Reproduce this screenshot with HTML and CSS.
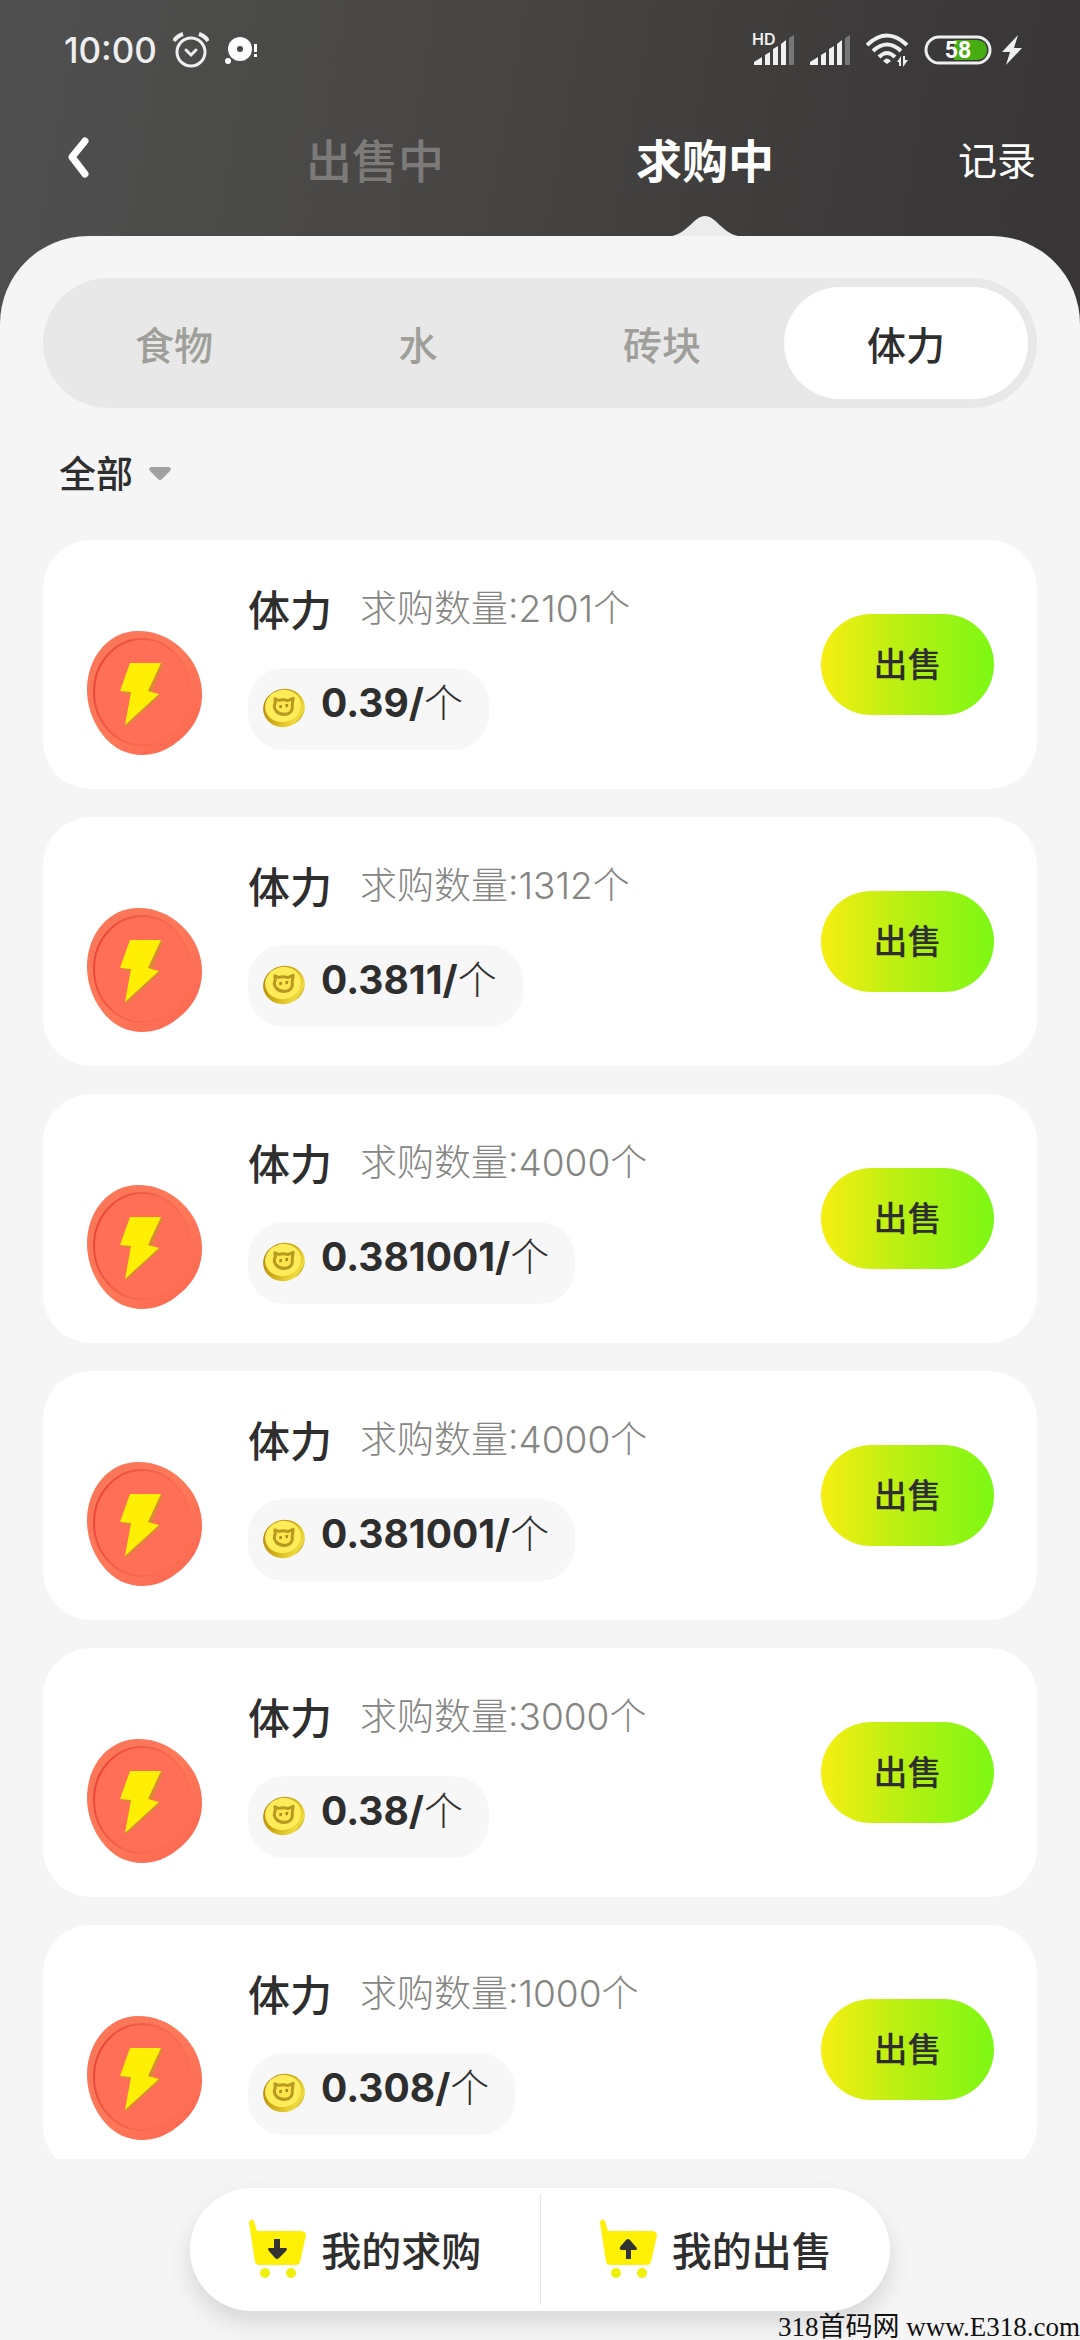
FILE: index.html
```html
<!DOCTYPE html>
<html lang="zh-CN">

<head>
    <meta charset="UTF-8">
    <meta name="viewport" content="width=device-width, initial-scale=1.0">
    <title>求购中</title>
    <link rel="stylesheet" href="styles.css">
</head>

<body>

    <!-- Shared icons -->
    <svg class="sprite" aria-hidden="true">
        <defs>
            <linearGradient id="rim" x1="0" y1="0" x2="1" y2="1">
                <stop offset="0" stop-color="#f8765a" />
                <stop offset="0.5" stop-color="#ff7859" />
                <stop offset="1" stop-color="#fb6550" />
            </linearGradient>
            <linearGradient id="groove" x1="0" y1="0.3" x2="1" y2="0.7">
                <stop offset="0" stop-color="#e9443a" />
                <stop offset="0.5" stop-color="#f4664c" />
                <stop offset="1" stop-color="#fd7055" />
            </linearGradient>
            <linearGradient id="gold" x1="0" y1="0" x2="1" y2="1">
                <stop offset="0" stop-color="#a87c10" />
                <stop offset="0.5" stop-color="#d0ae18" />
                <stop offset="0.8" stop-color="#f0dc40" />
                <stop offset="1" stop-color="#6e5312" />
            </linearGradient>
        </defs>
        <symbol id="energy" viewBox="0 0 115 125">
            <path fill="url(#rim)" d="M51 0C68 0 82 6 94 17C108 30 115 46 115 64C115 84 105 100 90 111C79 120 67 124 55 124C41 124 26 118 15 103C5 90 0 74 0 59C0 26 22 0 51 0Z" />
            <ellipse cx="55" cy="61" rx="48" ry="53" fill="#ff6f57" stroke="url(#groove)" stroke-width="2" />
            <path fill="#d98a35" d="M46 34L76 33L65 61L74 64L38 97L46 64L36 62Z" />
            <path fill="#ffef05" d="M43 32H74L61 60L72 63L38 94L44 61L33 60Z" />
        </symbol>
        <symbol id="gold-coin" viewBox="0 0 43 41">
            <ellipse cx="22" cy="21" rx="21" ry="19" transform="rotate(-14 22 21)" fill="url(#gold)" />
            <ellipse cx="21" cy="19" rx="18" ry="16" transform="rotate(-14 21 19)" fill="#ffec58" />
            <g transform="rotate(8 21 19)">
                <path fill="#ffe64e" stroke="#b69a20" stroke-width="3" stroke-linejoin="round" d="M12 13L16 14Q21 12 25 13L30 10L30 17Q32 23 27 26Q20 29 15 25Q11 21 13 17Z" />
                <path fill="#a98b1c" d="M17 19l3-1v3l-2 1zM23 17l3-1v3l-2 1z" />
            </g>
        </symbol>
        <symbol id="cart" viewBox="0 0 58 60">
            <path fill="#fff006" d="M1 3Q3-1 6 2L9 12H54Q58 13 58 16L52 43Q51 46 48 46H11Q8 46 7 43Z" />
            <circle cx="17" cy="54" r="5" fill="#f0f00c" />
            <circle cx="43" cy="54" r="5" fill="#f0f00c" />
        </symbol>
        <symbol id="signal" viewBox="0 0 41 30">
            <path fill="#efefef" d="M0 27L8 22V30H0ZM11 20L16 17V30H11ZM19 14L24 11V30H19ZM27 9L32 5V30H27Z" />
            <path fill="#777" d="M35 3L40 0V30H35Z" />
        </symbol>
    </svg>

    <header class="header">
        <!-- Status bar -->
        <div class="status-bar">
            <div class="status-left">
                <span class="clock">10:00</span>
                <svg width="36" height="36" viewBox="0 0 36 36" fill="none" stroke="#efefef" stroke-width="3" stroke-linecap="round">
                    <circle cx="18" cy="20" r="14" />
                    <path stroke-width="4" stroke-linecap="butt" d="M1 9Q4 4 10 2M35 9Q32 4 26 2" />
                    <path d="M13 18L18 23L23 18" />
                </svg>
                <svg class="chat" width="33" height="28" viewBox="0 0 33 28" fill="#fff">
                    <circle cx="15" cy="13" r="12" />
                    <circle cx="3" cy="25" r="3" />
                    <circle cx="15" cy="13" r="3" fill="#484746" />
                    <path d="M29 8h3v8h-3zM29 18h3v3h-3z" />
                </svg>
            </div>
            <div class="status-right">
                <span class="signal-hd">
                    <svg width="41" height="30"><use href="#signal" /></svg>
                    <span class="hd">HD</span>
                </span>
                <svg width="41" height="30"><use href="#signal" /></svg>
                <svg width="43" height="34" viewBox="0 0 43 34" fill="none" stroke="#efefef" stroke-width="4">
                    <path d="M1 12Q21-7 41 12M7 18Q21 5 35 18M13 24Q21 16 29 24" />
                    <path fill="#efefef" stroke="none" d="M17 28Q21 23 25 28L21 31ZM35 23V33H33V29H31ZM37 34V23H39V27H42Z" />
                </svg>
                <span class="battery">
                    <svg width="68" height="30" viewBox="0 0 68 30">
                        <path fill="#46ad12" d="M30 5H53Q63 6 63 15T53 25H30Z" />
                        <rect x="2" y="2" width="64" height="26" rx="13" fill="none" stroke="#efefef" stroke-width="3" />
                        <text class="battery-text" x="34" y="23" text-anchor="middle">58</text>
                    </svg>
                    <svg width="20" height="30" viewBox="0 0 20 30"><path fill="#efefef" d="M16 0L0 17H8L4 30L20 13H12Z" /></svg>
                </span>
            </div>
        </div>

        <!-- Top navigation -->
        <nav class="nav">
            <button class="back" aria-label="返回">
                <svg width="22" height="42" viewBox="0 0 22 42" fill="none" stroke="#fff" stroke-width="7" stroke-linecap="round" stroke-linejoin="round"><path d="M17 4L4 20L17 37" /></svg>
            </button>
            <div class="nav-tabs">
                <button class="nav-tab">出售中</button>
                <button class="nav-tab active">求购中
                    <svg class="peak" width="66" height="20" viewBox="0 0 66 20"><path fill="#ececec" d="M0 20C16 17 22 0 33 0S50 17 66 20Z" /></svg>
                </button>
            </div>
            <a class="records" href="#">记录</a>
        </nav>
    </header>

    <main class="sheet">
        <div class="segments">
            <button class="segment">食物</button>
            <button class="segment">水</button>
            <button class="segment">砖块</button>
            <button class="segment active">体力</button>
        </div>

        <div class="filter">
            <select id="filter" aria-label="筛选">
                <option>全部</option>
            </select>
            <svg width="22" height="14" viewBox="0 0 22 14"><path fill="#a1a1a1" d="M2 0H20Q23 1 21 4L13 12Q11 14 9 12L1 4Q-1 1 2 0Z" /></svg>
        </div>

        <!-- Order list -->
        <div class="list">
            <div class="card">
                <svg class="energy"><use href="#energy" /></svg>
                <div class="info">
                    <div class="title"><h2>体力</h2><span class="amount">求购数量:2101个</span></div>
                    <div class="price"><svg class="gold"><use href="#gold-coin" /></svg><span class="value"><b>0.39/</b>个</span></div>
                </div>
                <button class="sell">出售</button>
            </div>
            <div class="card">
                <svg class="energy"><use href="#energy" /></svg>
                <div class="info">
                    <div class="title"><h2>体力</h2><span class="amount">求购数量:1312个</span></div>
                    <div class="price"><svg class="gold"><use href="#gold-coin" /></svg><span class="value"><b>0.3811/</b>个</span></div>
                </div>
                <button class="sell">出售</button>
            </div>
            <div class="card">
                <svg class="energy"><use href="#energy" /></svg>
                <div class="info">
                    <div class="title"><h2>体力</h2><span class="amount">求购数量:4000个</span></div>
                    <div class="price"><svg class="gold"><use href="#gold-coin" /></svg><span class="value"><b>0.381001/</b>个</span></div>
                </div>
                <button class="sell">出售</button>
            </div>
            <div class="card">
                <svg class="energy"><use href="#energy" /></svg>
                <div class="info">
                    <div class="title"><h2>体力</h2><span class="amount">求购数量:4000个</span></div>
                    <div class="price"><svg class="gold"><use href="#gold-coin" /></svg><span class="value"><b>0.381001/</b>个</span></div>
                </div>
                <button class="sell">出售</button>
            </div>
            <div class="card">
                <svg class="energy"><use href="#energy" /></svg>
                <div class="info">
                    <div class="title"><h2>体力</h2><span class="amount">求购数量:3000个</span></div>
                    <div class="price"><svg class="gold"><use href="#gold-coin" /></svg><span class="value"><b>0.38/</b>个</span></div>
                </div>
                <button class="sell">出售</button>
            </div>
            <div class="card">
                <svg class="energy"><use href="#energy" /></svg>
                <div class="info">
                    <div class="title"><h2>体力</h2><span class="amount">求购数量:1000个</span></div>
                    <div class="price"><svg class="gold"><use href="#gold-coin" /></svg><span class="value"><b>0.308/</b>个</span></div>
                </div>
                <button class="sell">出售</button>
            </div>
        </div>

        <!-- Bottom actions -->
        <footer class="footer">
            <div class="actions">
                <button class="action">
                    <svg width="58" height="60" viewBox="0 0 58 60"><use href="#cart" /><path fill="#333" d="M26 20h6v9h6q2 1 0 3l-7 7q-2 2-4 0l-6-7q-2-2 0-3h5z" /></svg>
                    我的求购
                </button>
                <button class="action">
                    <svg width="58" height="60" viewBox="0 0 58 60"><use href="#cart" /><path fill="#333" d="M27 40h5v-9h5q2-1 0-3l-6-7q-2-2-4 0l-6 7q-1 2 1 3h5z" /></svg>
                    我的出售
                </button>
            </div>
        </footer>
    </main>

    <div class="watermark">318首码网 www.E318.com</div>

</body>

</html>
```
FILE: styles.css
```css
/* Global Styles */
* {
    box-sizing: border-box;
}

body {
    display: flex;
    flex-direction: column;
    position: relative;
    height: 100vh;
    margin: 0;
    overflow: hidden;
    font-family: Inter, "Noto Sans CJK SC", sans-serif;
    color: #2e2e2e;
    background: linear-gradient(100deg, #505050, #464543 35%, #3a3838 65%, #312f30);
}

button,
select {
    padding: 0;
    border: none;
    background: none;
    color: inherit;
    font-family: inherit;
    cursor: pointer;
}

svg {
    display: block;
    flex-shrink: 0;
}

.sprite {
    position: absolute;
    width: 0;
    height: 0;
}

/* Status Bar */
.status-bar {
    display: flex;
    justify-content: space-between;
    align-items: center;
    height: 100px;
    padding: 0 58px 0 64px;
    color: #efefef;
}

.status-left,
.status-right {
    display: flex;
    align-items: center;
    gap: 16px;
}

.status-right {
    gap: 15px;
}

.clock {
    font-size: 35px;
    font-weight: 500;
}

.signal-hd {
    position: relative;
}

.hd {
    position: absolute;
    top: -4px;
    left: -2px;
    font-size: 16px;
    font-weight: 600;
    line-height: 16px;
}

.battery {
    display: flex;
    gap: 10px;
}

.battery-text {
    font-family: Roboto, sans-serif;
    font-size: 23px;
    font-weight: 700;
    fill: #fff;
}

/* Top Navigation */
.nav {
    display: grid;
    grid-template-columns: 1fr minmax(0, 660px) 1fr;
    height: 136px;
    padding: 0 44px;
}

.nav-tabs {
    display: flex;
}

.nav-tab,
.records,
.back {
    padding-bottom: 20px;
}

.back {
    justify-self: start;
    padding-left: 24px;
}

.nav-tab {
    flex: 1;
    position: relative;
    font-size: 46px;
    font-weight: 500;
    color: #7c7b7a;
}

.nav-tab.active {
    font-weight: 700;
    color: #fff;
}

.peak {
    position: absolute;
    bottom: 0;
    left: calc(50% - 33px);
}

.records {
    align-self: center;
    justify-self: end;
    font-size: 39px;
    color: #fff;
    text-decoration: none;
}

/* Sheet */
.sheet {
    flex: 1;
    display: flex;
    flex-direction: column;
    min-height: 0;
    padding: 42px 43px 0;
    border-radius: 88px 88px 0 0;
    background-color: #f5f5f5;
}

.segments {
    display: flex;
    padding: 9px;
    border-radius: 65px;
    background-color: #e8e8e8;
}

.segment {
    flex: 1;
    height: 112px;
    border-radius: 56px;
    font-size: 39px;
    font-weight: 500;
    color: #9f9f9a;
}

.segment.active {
    background-color: #fff;
    color: #2e2e2e;
}

.filter {
    display: flex;
    align-items: center;
    gap: 16px;
    flex-shrink: 0;
    height: 132px;
    padding-left: 16px;
}

.filter select {
    appearance: none;
    font-size: 37px;
    font-weight: 500;
}

/* Order List */
.list {
    flex: 1;
    display: flex;
    flex-direction: column;
    gap: 28px;
    min-height: 0;
    overflow: hidden;
}

.card {
    display: flex;
    align-items: center;
    flex-shrink: 0;
    padding: 33px 43px 33px 44px;
    border-radius: 48px;
    background-color: #fff;
}

.energy {
    align-self: flex-end;
    width: 115px;
    height: 125px;
}

.info {
    flex: 1;
    display: flex;
    flex-direction: column;
    align-items: flex-start;
    gap: 30px;
    padding: 11px 0 6px 46px;
}

.title {
    display: flex;
    align-items: center;
    gap: 28px;
    line-height: 54px;
}

.title h2 {
    margin: 0;
    font-size: 42px;
    font-weight: 500;
}

.amount {
    padding-bottom: 4px;
    font-size: 37px;
    font-weight: 300;
    line-height: 50px;
    color: #858582;
}

.price {
    display: flex;
    align-items: center;
    gap: 16px;
    height: 82px;
    padding: 0 26px 4px 14px;
    border-radius: 36px;
    background-color: #f7f7f7;
}

.value {
    padding-bottom: 8px;
    font-size: 39px;
    font-weight: 300;
    line-height: 50px;
}

.price b {
    font-weight: 700;
}

.gold {
    width: 43px;
    height: 41px;
}

.sell {
    width: 173px;
    height: 101px;
    padding-bottom: 4px;
    border-radius: 51px;
    background: linear-gradient(90deg, #f8ee12, #b4f012 50%, #7cf814);
    font-size: 34px;
    font-weight: 500;
}

/* Bottom Actions */
.footer {
    padding: 29px 0;
}

.actions {
    display: flex;
    align-items: center;
    max-width: 700px;
    margin: 0 auto;
    border-radius: 62px;
    background-color: #fff;
    box-shadow: 0 12px 24px rgba(0, 0, 0, 0.12);
}

.action {
    flex: 1;
    display: flex;
    justify-content: center;
    align-items: center;
    gap: 15px;
    height: 123px;
    padding-bottom: 2px;
    font-size: 40px;
    font-weight: 500;
}

.action + .action {
    height: 111px;
    border-left: 1px solid #e6e6e6;
}

.watermark {
    position: absolute;
    right: 0;
    bottom: 0;
    font-family: "Liberation Serif", "Noto Sans CJK SC", serif;
    font-size: 27px;
    line-height: 26px;
    color: #111;
}
```
